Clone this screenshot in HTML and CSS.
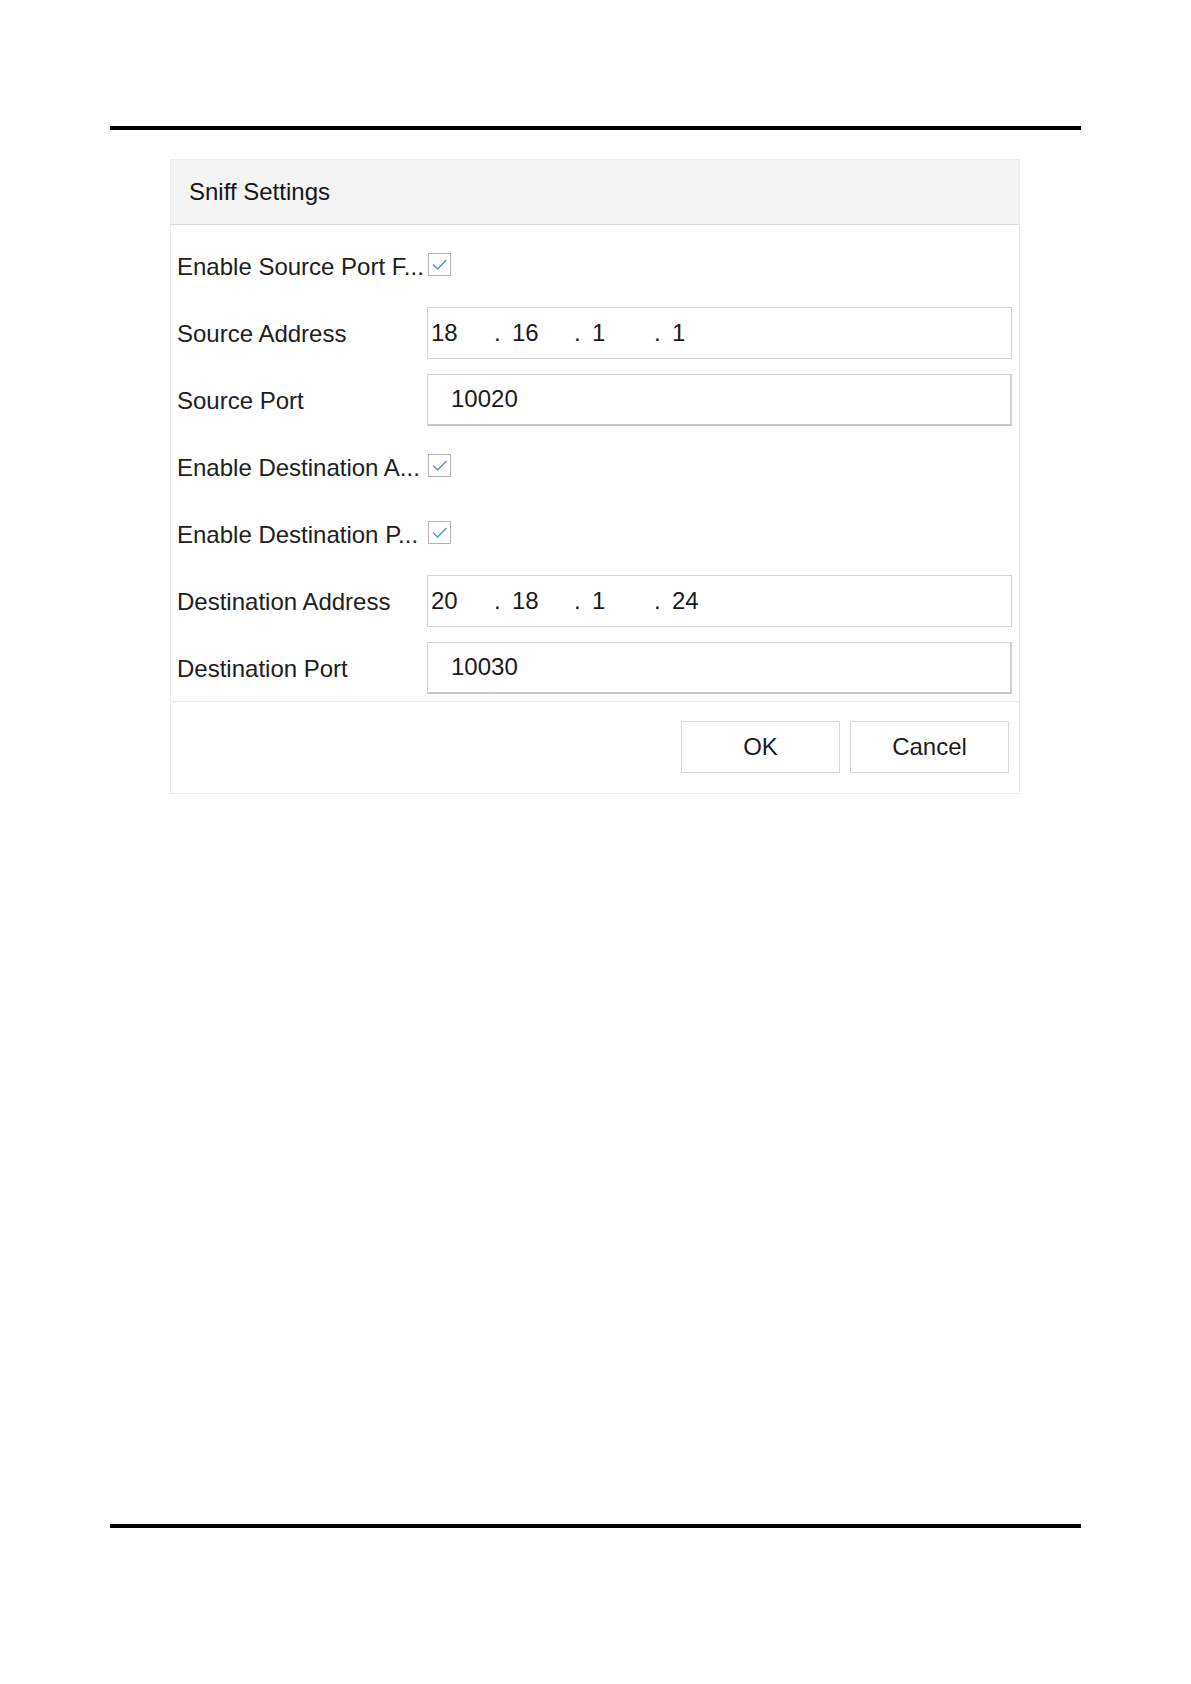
FILE: index.html
```html
<!DOCTYPE html>
<html lang="en">
<head>
<meta charset="utf-8">
<title>Sniff Settings</title>
<link rel="stylesheet" href="styles.css">
</head>
<body>
<div class="page">
  <div class="rule"></div>
  <div class="dialog">
    <div class="dialog-header">Sniff Settings</div>
    <div class="dialog-body">
      <div class="row">
        <div class="label">Enable Source Port F...</div>
        <div class="field"><span class="checkbox"><svg viewBox="0 0 23 23" width="21" height="21"><path d="M4.5 11.5 L9.5 16.5 L19 6.5" fill="none" stroke="#4a8fe0" stroke-width="1.5"/></svg></span></div>
      </div>
      <div class="row">
        <div class="label">Source Address</div>
        <div class="field"><div class="input ip"><span class="seg first">18</span><span class="seg"><span class="dot">.</span>16</span><span class="seg"><span class="dot">.</span>1</span><span class="seg"><span class="dot">.</span>1</span></div></div>
      </div>
      <div class="row">
        <div class="label">Source Port</div>
        <div class="field"><div class="input port">10020</div></div>
      </div>
      <div class="row">
        <div class="label">Enable Destination A...</div>
        <div class="field"><span class="checkbox"><svg viewBox="0 0 23 23" width="21" height="21"><path d="M4.5 11.5 L9.5 16.5 L19 6.5" fill="none" stroke="#4a8fe0" stroke-width="1.5"/></svg></span></div>
      </div>
      <div class="row">
        <div class="label">Enable Destination P...</div>
        <div class="field"><span class="checkbox"><svg viewBox="0 0 23 23" width="21" height="21"><path d="M4.5 11.5 L9.5 16.5 L19 6.5" fill="none" stroke="#4a8fe0" stroke-width="1.5"/></svg></span></div>
      </div>
      <div class="row">
        <div class="label">Destination Address</div>
        <div class="field"><div class="input ip"><span class="seg first">20</span><span class="seg"><span class="dot">.</span>18</span><span class="seg"><span class="dot">.</span>1</span><span class="seg"><span class="dot">.</span>24</span></div></div>
      </div>
      <div class="row">
        <div class="label">Destination Port</div>
        <div class="field"><div class="input port">10030</div></div>
      </div>
    </div>
    <div class="dialog-footer">
      <button class="btn">OK</button>
      <button class="btn">Cancel</button>
    </div>
  </div>
  <div class="rule bottom"></div>
</div>
</body>
</html>
```

FILE: styles.css
```css
html, body {
  margin: 0;
  padding: 0;
  background: #fff;
}
body {
  font-family: "Liberation Sans", Arial, sans-serif;
  color: #1c1c1c;
  width: 1191px;
  height: 1684px;
}
.page {
  padding: 126px 110px 0 110px;
  width: 971px;
}
.rule {
  height: 4px;
  background: #000;
}
.rule.bottom {
  margin-top: 730px;
}
.dialog {
  margin: 29px 0 0 60px;
  width: 848px;
  border: 1px solid #ececec;
  background: #fff;
}
.dialog-header {
  height: 64px;
  background: #f4f4f4;
  border-bottom: 1px solid #dcdcdc;
  padding-left: 18px;
  display: flex;
  align-items: center;
  font-size: 24px;
  color: #151515;
}
.dialog-body {
  padding: 7px 7px 0 6px;
}
.row {
  display: grid;
  grid-template-columns: 250px 1fr;
  height: 67px;
  align-items: center;
}
.label {
  font-size: 24px;
  white-space: nowrap;
  overflow: hidden;
  color: #202020;
  padding-top: 2px;
}
.field {
  display: flex;
  align-items: center;
}
.checkbox {
  width: 21px;
  height: 21px;
  border: 1px solid #b3b3b3;
  margin-left: 1px;
  margin-bottom: 2px;
  display: flex;
  background: #fff;
}
.input {
  box-sizing: border-box;
  width: 100%;
  height: 52px;
  border: 1px solid #d4d4d4;
  display: flex;
  align-items: center;
  font-size: 24px;
  color: #1a1a1a;
}
.input.ip {
  padding-left: 3px;
}
.input.port {
  padding-left: 23px;
  border-bottom: 2px solid #c6c6c6;
  border-right: 2px solid #d0d0d0;
}
.seg {
  display: inline-block;
  width: 80px;
  white-space: nowrap;
}
.seg.first {
  width: 63px;
}
.dot {
  display: inline-block;
  width: 18px;
}
.dialog-footer {
  border-top: 1px solid #ececec;
  padding: 19px 10px 20px 10px;
  display: flex;
  justify-content: flex-end;
  gap: 10px;
}
.btn {
  width: 159px;
  height: 52px;
  border: 1px solid #d9d9d9;
  background: #fff;
  font-family: "Liberation Sans", Arial, sans-serif;
  font-size: 24px;
  color: #1c1c1c;
  padding: 0;
}
```
